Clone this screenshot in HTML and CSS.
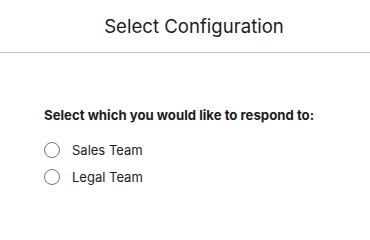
FILE: index.html
```html
<!DOCTYPE html>
<html>
<head>
<meta charset="utf-8">
<link rel="stylesheet" href="styles.css">
</head>
<body>
<header class="header">
  <h1 class="title">Select Configuration</h1>
</header>
<main class="content">
  <p class="prompt">Select which you would like to respond to:</p>
  <ul class="options">
    <li class="option"><span class="radio"></span><span class="option-label">Sales Team</span></li>
    <li class="option"><span class="radio"></span><span class="option-label">Legal Team</span></li>
  </ul>
</main>
</body>
</html>
```
FILE: styles.css
```css
html, body {
  margin: 0;
  padding: 0;
  background: #ffffff;
}
body {
  font-family: Inter, "Noto Sans", sans-serif;
  color: #1d1d1f;
  width: 370px;
  height: 208px;
  overflow: hidden;
}
.header {
  height: 52px;
  border-bottom: 1px solid #c4c4c4;
  display: flex;
  align-items: center;
  justify-content: center;
  padding-left: 18px;
}
.title {
  margin: 0;
  font-size: 18.6px;
  font-weight: 400;
  line-height: 22px;
  letter-spacing: 0;
  margin-bottom: 1px;
}
.content {
  padding: 0 0 0 44px;
}
.prompt {
  margin: 54px 0 0 0;
  font-size: 13.2px;
  font-weight: 700;
  line-height: 16px;
}
.options {
  list-style: none;
  margin: 18px 0 0 0;
  padding: 0;
  display: flex;
  flex-direction: column;
  gap: 10.5px;
}
.option {
  display: flex;
  align-items: center;
  gap: 12px;
  height: 17px;
  font-size: 13px;
}
.radio {
  width: 16px;
  height: 16px;
  box-sizing: border-box;
  border: 1px solid #767676;
  border-radius: 50%;
}
```
